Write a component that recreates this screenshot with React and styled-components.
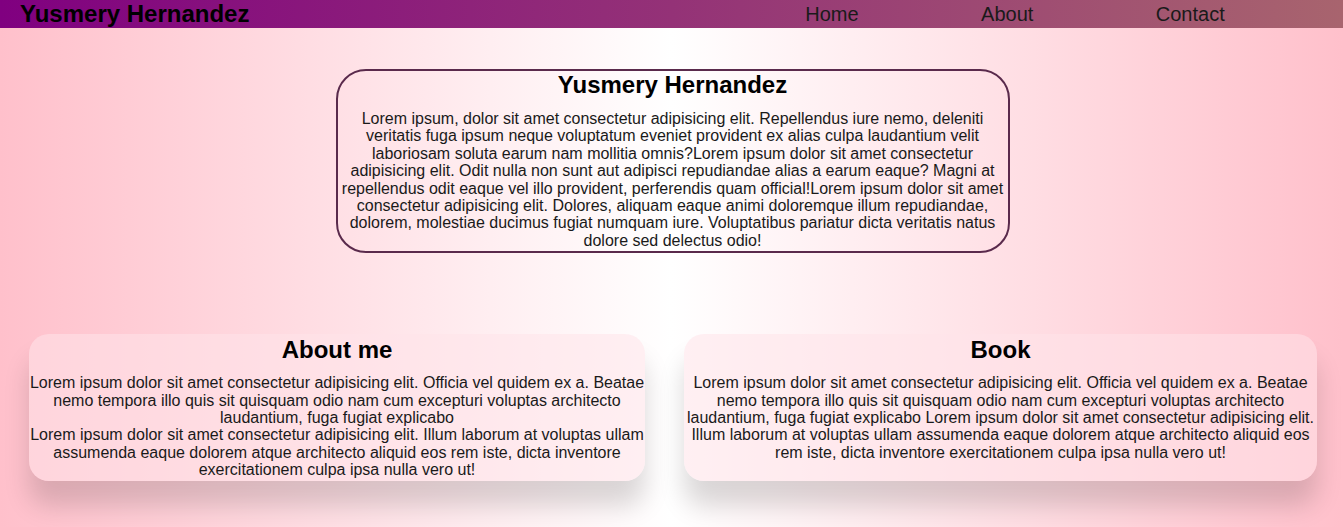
import React from 'react';
import styled, { createGlobalStyle } from 'styled-components';

const GlobalStyle = createGlobalStyle`
	html, body {
		margin: 0;
		padding: 0;
	}
	body {
		font-family: "Liberation Sans", Arial, sans-serif;
		min-height: 527px;
		background: linear-gradient(to right, #ffc0cb, #ffffff, #ffc0cb);
		color: #000;
	}
`;

const App = () => {
	return (
		<>
			<GlobalStyle />
			<Header>
				<Brand>Yusmery Hernandez</Brand>
				<Nav>
					<NavLink href="#home">Home</NavLink>
					<NavLink href="#about">About</NavLink>
					<NavLink href="#contact">Contact</NavLink>
				</Nav>
			</Header>

			<Main>
				<Hero>
					<HeroTitle>Yusmery Hernandez</HeroTitle>
					<HeroText>
						Lorem ipsum, dolor sit amet consectetur adipisicing elit. Repellendus iure nemo, deleniti
						veritatis fuga ipsum neque voluptatum eveniet provident ex alias culpa laudantium velit
						laboriosam soluta earum nam mollitia omnis?Lorem ipsum dolor sit amet consectetur
						adipisicing elit. Odit nulla non sunt aut adipisci repudiandae alias a earum eaque? Magni at
						repellendus odit eaque vel illo provident, perferendis quam official!Lorem ipsum dolor sit amet
						consectetur adipisicing elit. Dolores, aliquam eaque animi doloremque illum repudiandae,
						dolorem, molestiae ducimus fugiat numquam iure. Voluptatibus pariatur dicta veritatis natus
						dolore sed delectus odio!
					</HeroText>
				</Hero>

				<Cards>
					<Card>
						<CardTitle>About me</CardTitle>
						<CardText>
							Lorem ipsum dolor sit amet consectetur adipisicing elit. Officia vel quidem ex a. Beatae
							nemo tempora illo quis sit quisquam odio nam cum excepturi voluptas architecto
							laudantium, fuga fugiat explicabo
							<br />
							Lorem ipsum dolor sit amet consectetur adipisicing elit. Illum laborum at voluptas ullam
							assumenda eaque dolorem atque architecto aliquid eos rem iste, dicta inventore
							exercitationem culpa ipsa nulla vero ut!
						</CardText>
					</Card>
					<Card>
						<CardTitle>Book</CardTitle>
						<CardText>
							Lorem ipsum dolor sit amet consectetur adipisicing elit. Officia vel quidem ex a. Beatae
							nemo tempora illo quis sit quisquam odio nam cum excepturi voluptas architecto
							laudantium, fuga fugiat explicabo Lorem ipsum dolor sit amet consectetur adipisicing elit.
							Illum laborum at voluptas ullam assumenda eaque dolorem atque architecto aliquid eos
							rem iste, dicta inventore exercitationem culpa ipsa nulla vero ut!
						</CardText>
					</Card>
				</Cards>
			</Main>
		</>
	);
};

export default App;

// Styled-components
const Header = styled.header`
	display: flex;
	justify-content: space-between;
	align-items: center;
	height: 28px;
	padding: 0 57px 0 20px;
	background: linear-gradient(to right, #800080, #a8646e);
`;

const Brand = styled.h1`
	margin: 0;
	font-size: 24px;
	font-weight: bold;
	line-height: 28px;
	color: #000;
`;

const Nav = styled.nav`
	display: flex;
	justify-content: space-around;
	width: 542px;
`;

const NavLink = styled.a`
	font-size: 20px;
	line-height: 28px;
	color: #1a1a1a;
	text-decoration: none;
`;

const Main = styled.main`
	display: flex;
	flex-direction: column;
	align-items: center;
	padding: 41px 0 0;
`;

const Hero = styled.section`
	box-sizing: border-box;
	width: 674px;
	margin-left: 2px;
	padding: 1px 1px 2px;
	border: 2px solid #5a2a4c;
	border-radius: 30px;
	text-align: center;
`;

const HeroTitle = styled.h2`
	margin: 0 0 13px;
	font-size: 24px;
	line-height: 25px;
`;

const HeroText = styled.p`
	margin: 0;
	font-size: 16px;
	line-height: 17.4px;
	color: #1a1a1a;
`;

const Cards = styled.div`
	display: grid;
	grid-template-columns: 616px 633px;
	gap: 39px;
	align-self: stretch;
	margin: 81px 26px 0 29px;
`;

const Card = styled.article`
	padding: 3px 0 2px;
	border-radius: 20px;
	background: rgba(255, 228, 233, 0.55);
	box-shadow: 0 25px 26px rgba(0, 0, 0, 0.15);
	text-align: center;
`;

const CardTitle = styled.h2`
	margin: 0 0 12px;
	font-size: 24px;
	line-height: 25px;
`;

const CardText = styled.p`
	margin: 0;
	font-size: 16px;
	line-height: 17.4px;
	color: #1a1a1a;
`;
